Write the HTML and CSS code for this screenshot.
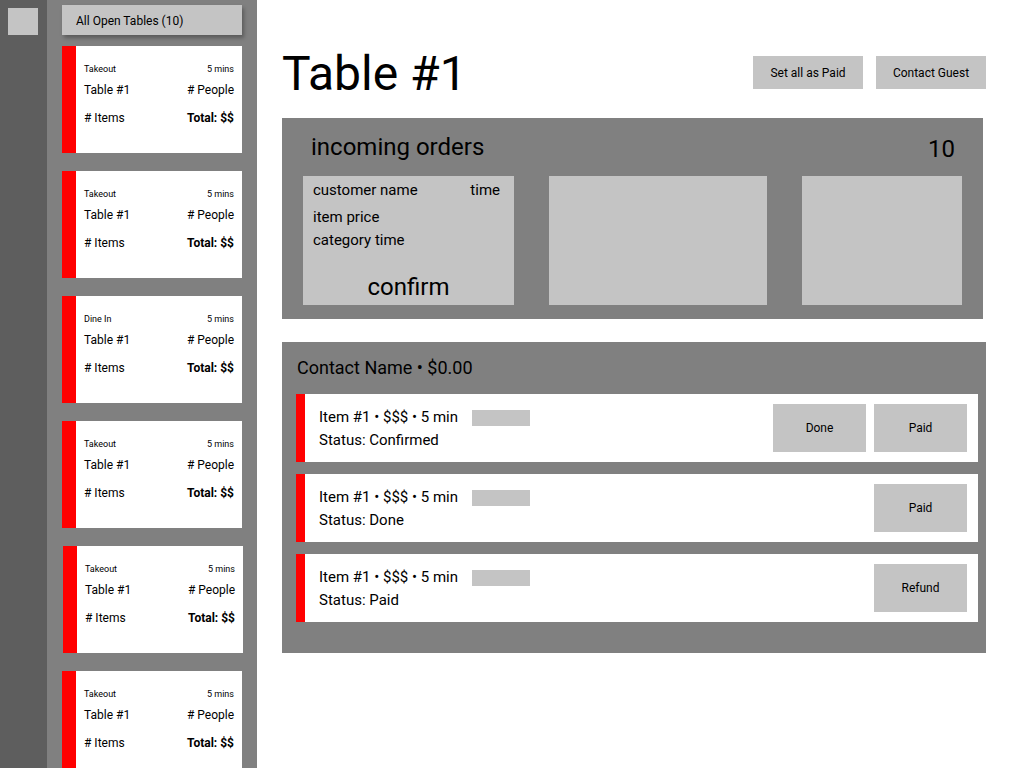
FILE: index.html
```html
<!DOCTYPE html>
<html lang="en">
<head>
<meta charset="utf-8">
<title>Table #1</title>
<link rel="stylesheet" href="styles.css">
</head>
<body>
<div class="app">
  <nav class="rail"><div class="rail-square"></div></nav>
  <aside class="sidebar">
    <div class="all-tables">All Open Tables (10)</div>
    <div class="card-list">
      <div class="card"><div class="card-bar"></div><div class="card-body">
        <div class="card-row small"><span>Takeout</span><span>5 mins</span></div>
        <div class="card-row mid"><span>Table #1</span><span># People</span></div>
        <div class="card-row last"><span># Items</span><span class="bold">Total: $$</span></div>
      </div></div>
      <div class="card"><div class="card-bar"></div><div class="card-body">
        <div class="card-row small"><span>Takeout</span><span>5 mins</span></div>
        <div class="card-row mid"><span>Table #1</span><span># People</span></div>
        <div class="card-row last"><span># Items</span><span class="bold">Total: $$</span></div>
      </div></div>
      <div class="card"><div class="card-bar"></div><div class="card-body">
        <div class="card-row small"><span>Dine In</span><span>5 mins</span></div>
        <div class="card-row mid"><span>Table #1</span><span># People</span></div>
        <div class="card-row last"><span># Items</span><span class="bold">Total: $$</span></div>
      </div></div>
      <div class="card"><div class="card-bar"></div><div class="card-body">
        <div class="card-row small"><span>Takeout</span><span>5 mins</span></div>
        <div class="card-row mid"><span>Table #1</span><span># People</span></div>
        <div class="card-row last"><span># Items</span><span class="bold">Total: $$</span></div>
      </div></div>
      <div class="card shifted"><div class="card-bar"></div><div class="card-body">
        <div class="card-row small"><span>Takeout</span><span>5 mins</span></div>
        <div class="card-row mid"><span>Table #1</span><span># People</span></div>
        <div class="card-row last"><span># Items</span><span class="bold">Total: $$</span></div>
      </div></div>
      <div class="card"><div class="card-bar"></div><div class="card-body">
        <div class="card-row small"><span>Takeout</span><span>5 mins</span></div>
        <div class="card-row mid"><span>Table #1</span><span># People</span></div>
        <div class="card-row last"><span># Items</span><span class="bold">Total: $$</span></div>
      </div></div>
    </div>
  </aside>
  <main class="main">
    <header class="header">
      <h1 class="title">Table #1</h1>
      <div class="header-actions">
        <button class="btn">Set all as Paid</button>
        <button class="btn">Contact Guest</button>
      </div>
    </header>
    <section class="incoming">
      <div class="incoming-head"><span class="incoming-title">incoming orders</span><span class="incoming-count">10</span></div>
      <div class="incoming-boxes">
        <div class="order-box first">
          <div class="ob-row"><span>customer name</span><span>time</span></div>
          <div class="ob-line l1">item price</div>
          <div class="ob-line l2">category time</div>
          <div class="ob-confirm">confirm</div>
        </div>
        <div class="order-box second"></div>
        <div class="order-box third"></div>
      </div>
    </section>
    <section class="contact">
      <div class="contact-head">Contact Name • $0.00</div>
      <div class="items">
        <div class="item">
          <div class="item-bar"></div>
          <div class="item-info">
            <div class="item-line">Item #1 • $$$ • 5 min <span class="item-tag"></span></div>
            <div class="item-line">Status: Confirmed</div>
          </div>
          <div class="item-actions"><button class="btn big">Done</button><button class="btn big">Paid</button></div>
        </div>
        <div class="item">
          <div class="item-bar"></div>
          <div class="item-info">
            <div class="item-line">Item #1 • $$$ • 5 min <span class="item-tag"></span></div>
            <div class="item-line">Status: Done</div>
          </div>
          <div class="item-actions"><button class="btn big">Paid</button></div>
        </div>
        <div class="item">
          <div class="item-bar"></div>
          <div class="item-info">
            <div class="item-line">Item #1 • $$$ • 5 min <span class="item-tag"></span></div>
            <div class="item-line">Status: Paid</div>
          </div>
          <div class="item-actions"><button class="btn big">Refund</button></div>
        </div>
      </div>
    </section>
  </main>
</div>
</body>
</html>
```
FILE: styles.css
```css
* { box-sizing: border-box; }
html, body { margin: 0; padding: 0; }
body {
  font-family: Roboto, "Liberation Sans", sans-serif;
  color: #000;
  background: #fff;
  overflow: hidden;
}
.app { display: flex; height: 768px; overflow: hidden; }

.rail { width: 47px; flex: none; background: #5e5e5e; padding: 8px; }
.rail-square { width: 30px; height: 27px; background: #c4c4c4; }

.sidebar { width: 210px; flex: none; background: #808080; padding: 5px 15px 0; overflow: hidden; }
.all-tables {
  height: 30px; background: #c4c4c4; font-size: 12px; padding: 2px 0 0 14px;
  display: flex; align-items: center;
  box-shadow: 2px 3px 4px rgba(0,0,0,0.3);
}
.card-list { display: flex; flex-direction: column; gap: 18px; margin-top: 11px; }
.card { display: flex; height: 107px; background: #fff; flex: none; }
.card.shifted { margin-left: 1px; margin-right: -1px; }
.card-bar { width: 14px; background: #ff0000; flex: none; }
.card-body { flex: 1; padding: 17px 8px 0; display: flex; flex-direction: column; }
.card-row { display: flex; justify-content: space-between; font-size: 12px; height: 16px; align-items: center; }
.card-row.small { font-size: 9px; height: 12px; }
.card-row.mid { margin-top: 7px; }
.card-row.last { margin-top: 12px; }
.bold { font-weight: 700; }

.main { flex: 1; padding: 48px 38px 0 25px; }
.header { display: flex; justify-content: space-between; align-items: flex-start; height: 52px; margin-bottom: 18px; }
.title { margin: 0; font-size: 48px; font-weight: 400; line-height: 52px; }
.header-actions { display: flex; gap: 13px; margin-top: 8px; }
.btn {
  border: 0; background: #c4c4c4; font-family: inherit; font-size: 12px; color: #000;
  width: 110px; height: 33px; padding: 0; cursor: pointer;
}
.btn.big { width: 93px; height: 48px; }

.incoming { width: 701px; height: 201px; background: #808080; padding: 12px 21px 14px; }
.incoming-head { display: flex; justify-content: space-between; align-items: center; height: 34px; padding: 0 7px 0 8px; margin-bottom: 12px; font-size: 24px; }
.incoming-count { position: relative; top: 2px; }
.incoming-boxes { display: flex; height: 129px; }
.order-box { background: #c4c4c4; height: 129px; }
.order-box.first { width: 211px; padding: 5px 14px 0 10px; display: flex; flex-direction: column; font-size: 15px; }
.order-box.second { width: 218px; margin-left: 35px; }
.order-box.third { width: 160px; margin-left: 35px; }
.ob-row { display: flex; justify-content: space-between; height: 18px; align-items: center; }
.ob-line { height: 18px; display: flex; align-items: center; }
.ob-line.l1 { margin-top: 9px; }
.ob-line.l2 { margin-top: 5px; }
.ob-confirm { font-size: 24px; text-align: center; margin-top: 24px; padding-left: 4px; line-height: 28px; }

.contact { width: 704px; height: 311px; background: #808080; margin-top: 23px; padding: 14px 8px 31px 14px; }
.contact-head { font-size: 18px; height: 24px; line-height: 24px; padding-left: 1px; margin-bottom: 14px; }
.items { display: flex; flex-direction: column; gap: 12px; }
.item { display: flex; height: 68px; background: #fff; align-items: stretch; }
.item-bar { width: 9px; background: #ff0000; flex: none; }
.item-info { flex: 1; padding: 2px 0 0 14px; display: flex; flex-direction: column; justify-content: center; font-size: 15px; }
.item-line { line-height: 23px; display: flex; align-items: center; }
.item-tag { display: inline-block; width: 58px; height: 16px; background: #c4c4c4; margin-left: 14px; }
.item-actions { display: flex; gap: 8px; padding: 10px 11px 10px 0; }
```
